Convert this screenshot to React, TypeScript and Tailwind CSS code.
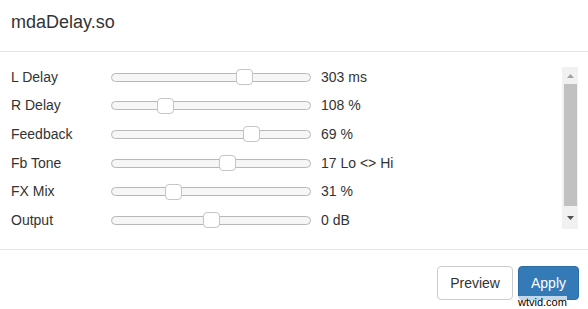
const params = [
  { label: "L Delay", pos: 133, value: "303 ms" },
  { label: "R Delay", pos: 54, value: "108 %" },
  { label: "Feedback", pos: 140, value: "69 %" },
  { label: "Fb Tone", pos: 116, value: "17 Lo <> Hi" },
  { label: "FX Mix", pos: 62, value: "31 %" },
  { label: "Output", pos: 100, value: "0 dB" },
];

function Slider({ pos }: { pos: number }) {
  return (
    <div className="relative w-[200px] h-4 flex items-center">
      <div className="w-full h-[9px] rounded-full border border-[#b8b8b8] bg-[#f6f6f6]" />
      <div
        className="absolute top-0 w-[17px] h-4 rounded-[4px] border border-[#c5c5c5] bg-white"
        style={{ left: pos - 8 }}
      />
    </div>
  );
}

export default function App() {
  return (
    <div className="relative w-[588px] h-[309px] bg-white text-[#333] font-['Liberation_Sans',Arial,sans-serif] overflow-hidden">
      <div className="h-[52px] pl-[11px] pt-[11px] border-b border-[#e5e5e5]">
        <h1 className="text-[18px] leading-[22px]">mdaDelay.so</h1>
      </div>

      <div className="flex pl-[11px] pr-[10px] pt-[11px] h-[197px]">
        <div className="flex-1 flex flex-col">
          {params.map((p) => (
            <div key={p.label} className="flex items-center h-[28.6px] text-[14px]">
              <span className="w-[100px]">{p.label}</span>
              <Slider pos={p.pos} />
              <span className="ml-[10px]">{p.value}</span>
            </div>
          ))}
        </div>
        <div className="w-[16px] h-[162px] mt-[4px] bg-[#f1f1f1] flex flex-col items-center">
          <div className="h-[17px] flex items-center justify-center">
            <svg width="7" height="4" viewBox="0 0 7 4">
              <path d="M0 4 L3.5 0 L7 4 Z" fill="#a3a3a3" />
            </svg>
          </div>
          <div className="w-[13px] h-[122px] bg-[#c1c1c1]" />
          <div className="flex-1 flex items-center justify-center">
            <svg width="7" height="4" viewBox="0 0 7 4">
              <path d="M0 0 L3.5 4 L7 0 Z" fill="#505050" />
            </svg>
          </div>
        </div>
      </div>

      <div className="border-t border-[#e5e5e5] flex justify-end gap-[5px] pt-[16px] pr-[9px]">
        <button className="h-[34px] px-[12px] text-[14px] rounded-[4px] border border-[#ccc] bg-white text-[#333]">
          Preview
        </button>
        <button className="h-[34px] px-[12px] text-[14px] rounded-[4px] border border-[#2e6da4] bg-[#337ab7] text-white">
          Apply
        </button>
      </div>

      <span className="absolute left-[518px] top-[296px] text-[11px] leading-[12px] text-black bg-white/70">
        wtvid.com
      </span>
    </div>
  );
}
